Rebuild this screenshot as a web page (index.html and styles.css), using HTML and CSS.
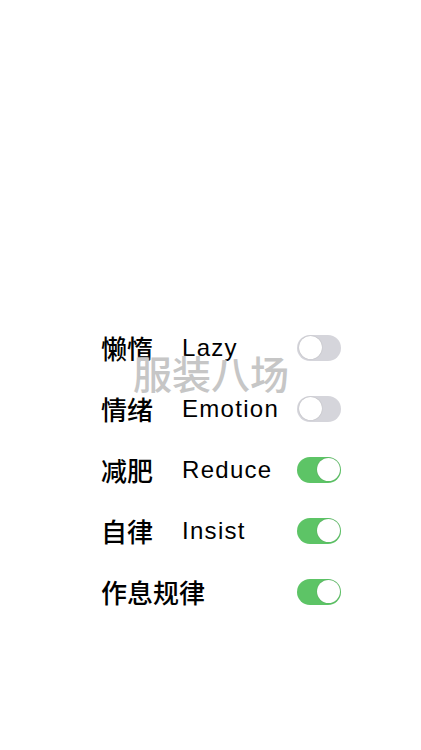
FILE: index.html
```html
<!DOCTYPE html>
<html lang="zh">
<head>
    <meta charset="UTF-8">
    <meta name="viewport" content="width=device-width, initial-scale=1.0">
    <title>习惯</title>
    <link rel="stylesheet" href="styles.css">
</head>
<body>

<div class="list">
    <div class="row">
        <span class="cn">懒惰</span>
        <span class="en">Lazy</span>
        <span class="switch"></span>
    </div>
    <div class="row">
        <span class="cn">情绪</span>
        <span class="en">Emotion</span>
        <span class="switch"></span>
    </div>
    <div class="row">
        <span class="cn">减肥</span>
        <span class="en">Reduce</span>
        <span class="switch on"></span>
    </div>
    <div class="row">
        <span class="cn">自律</span>
        <span class="en">Insist</span>
        <span class="switch on"></span>
    </div>
    <div class="row">
        <span class="cn wide">作息规律</span>
        <span class="switch on"></span>
    </div>
</div>

<div class="watermark">服装八场</div>

</body>
</html>
```

FILE: styles.css
```css
* {
    box-sizing: border-box;
}
body {
    margin: 0;
    background: #fff;
    height: 750px;
    font-family: "Liberation Sans", "Noto Sans CJK SC", sans-serif;
    color: #000;
    position: relative;
}
.list {
    padding: 317px 0 0 101px;
}
.row {
    display: grid;
    grid-template-columns: 81px 115px 44px;
    align-items: center;
    height: 61px;
}
.cn {
    font-family: "Noto Sans CJK SC", sans-serif;
    font-size: 26px;
    font-weight: 500;
    line-height: 1;
}
.cn.wide {
    grid-column: 1 / 3;
}
.en {
    font-size: 24px;
    letter-spacing: 1.3px;
    line-height: 1;
}
.switch {
    position: relative;
    width: 44px;
    height: 26px;
    border-radius: 13px;
    background: #d5d5db;
}
.switch:after {
    content: '';
    position: absolute;
    top: 1.5px;
    left: 1.5px;
    width: 23px;
    height: 23px;
    border-radius: 50%;
    background: #fff;
    box-shadow: 0 0 1px rgba(0, 0, 0, 0.3);
}
.switch.on {
    background: #5dc466;
}
.switch.on:after {
    left: 19.5px;
}
/* водяной знак */
.watermark {
    position: absolute;
    left: 133px;
    top: 353px;
    font-family: "Noto Sans CJK SC", sans-serif;
    font-size: 39px;
    font-weight: 500;
    line-height: 1;
    color: #c6c6c6;
    text-shadow: 0 0 2px rgba(255, 255, 255, 0.8);
}
```
